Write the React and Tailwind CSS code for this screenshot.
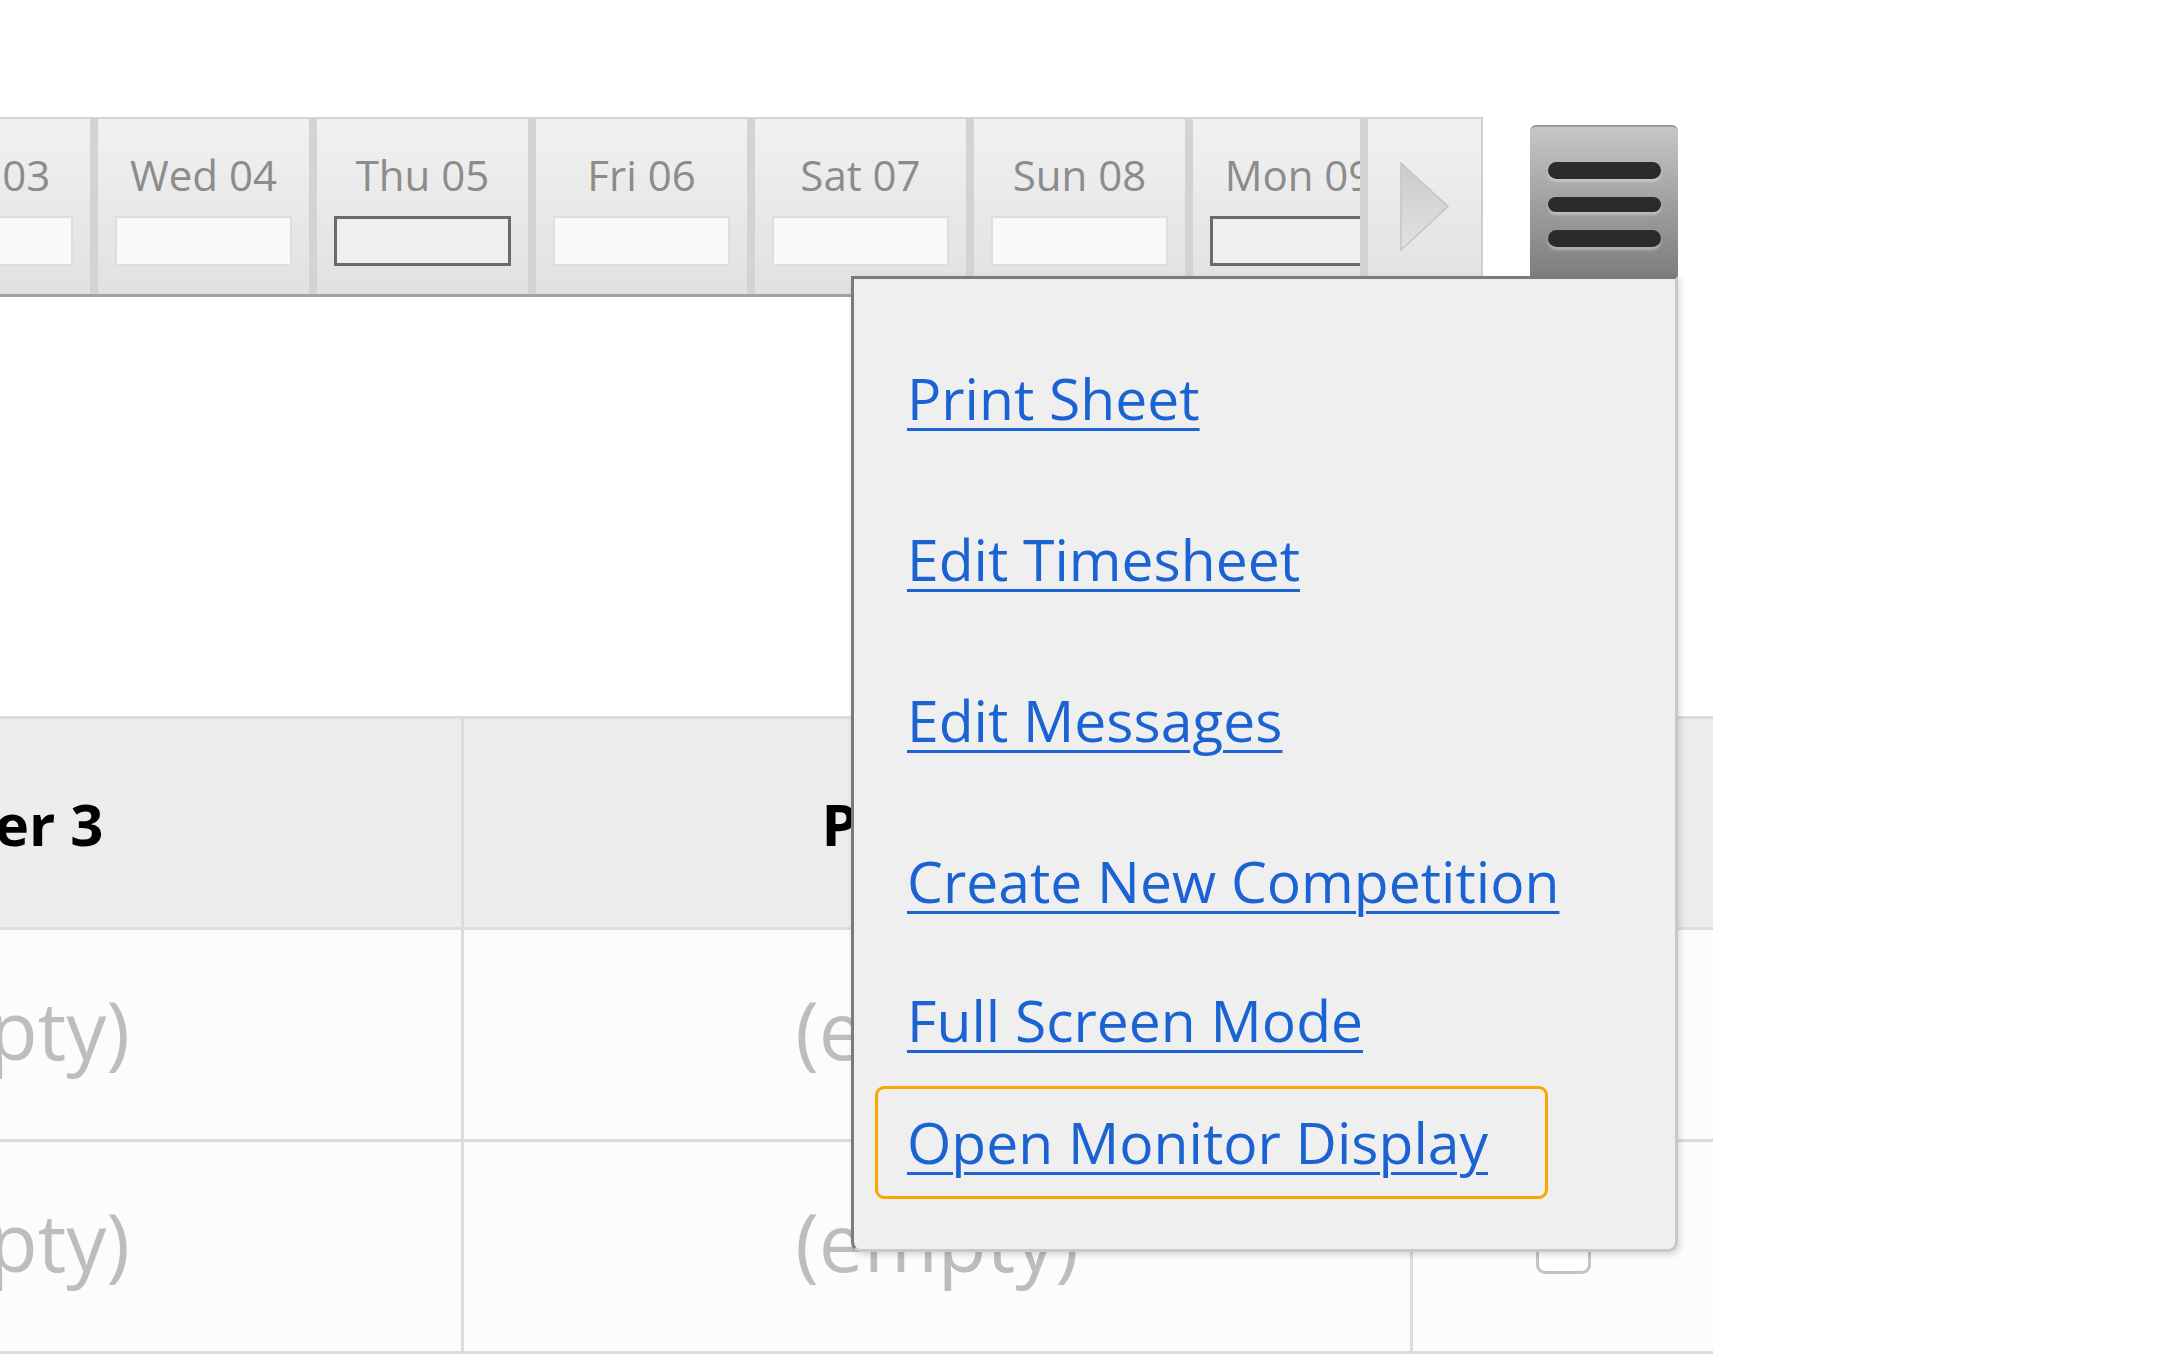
import React from "react";

const days = [
  { label: "Tue 03" },
  { label: "Wed 04" },
  { label: "Thu 05", active: true },
  { label: "Fri 06" },
  { label: "Sat 07" },
  { label: "Sun 08" },
  { label: "Mon 09", active: true },
];

const menuItems = [
  { label: "Print Sheet", h: "h-[161px]" },
  { label: "Edit Timesheet", h: "h-[161px]" },
  { label: "Edit Messages", h: "h-[161px]" },
  { label: "Create New Competition", h: "h-[161px]" },
  { label: "Full Screen Mode", h: "h-[116px]" },
];

function DayCell({ label, active }) {
  return (
    <div className="flex h-[175px] w-[211px] shrink-0 flex-col items-center bg-gradient-to-b from-[#f1f1f1] to-[#e1e1e1] pt-[32px]">
      <span className="text-[42px] leading-[48px] whitespace-nowrap text-[#8c8c8c]">{label}</span>
      {active ? (
        <div className="mt-[17px] h-[50px] w-[177px] border-[3px] border-[#6a6a6a] bg-[#efefef]" />
      ) : (
        <div className="mt-[17px] h-[50px] w-[177px] border-2 border-[#dedede] bg-[#f9f9f9]" />
      )}
    </div>
  );
}

function Arrow() {
  return (
    <svg width="50" height="89" viewBox="0 0 50 89">
      <defs>
        <linearGradient id="tri" x1="0" y1="0" x2="0" y2="1">
          <stop offset="0" stopColor="#cbcbcb" />
          <stop offset="1" stopColor="#e2e2e2" />
        </linearGradient>
      </defs>
      <path d="M1 1 L48 44.5 L1 88 Z" fill="url(#tri)" stroke="#c4c4c4" strokeWidth="1.5" />
    </svg>
  );
}

function Checkbox() {
  return <div className="h-[55px] w-[55px] rounded-[9px] border-[3px] border-[#c4c4c4] bg-white" />;
}

export default function App() {
  return (
    <div className="min-h-[1358px] w-full overflow-hidden bg-white font-['Open_Sans',sans-serif]">
      {/* date strip + menu button */}
      <div className="flex items-start pt-[117px]">
        <div className="flex border-t-2 border-r-2 border-b-[3px] border-t-[#d4d4d4] border-r-[#cfcfcf] border-b-[#a2a2a2] bg-[#d3d3d3]">
          <div className="w-[1360px] overflow-hidden">
            <div className="-ml-[121px] flex gap-[8px]">
              {days.map((d) => (
                <DayCell key={d.label} {...d} />
              ))}
            </div>
          </div>
          <div className="ml-[8px] flex h-[175px] w-[113px] items-center justify-center bg-gradient-to-b from-[#f1f1f1] to-[#e1e1e1]">
            <Arrow />
          </div>
        </div>

        <div className="relative ml-[47px] mt-[8px]">
          <button className="flex h-[155px] w-[148px] flex-col items-center rounded-t-[6px] border-t-2 border-[#9a9a9a] bg-gradient-to-b from-[#c6c6c6] to-[#7c7c7c] pt-[35px]">
            <span className="h-[17px] w-[113px] rounded-full bg-[#2b2b2b] shadow-[0_3px_3px_rgba(255,255,255,0.35)]" />
            <span className="mt-[18px] h-[15px] w-[113px] rounded-full bg-[#2b2b2b] shadow-[0_3px_3px_rgba(255,255,255,0.35)]" />
            <span className="mt-[18px] h-[17px] w-[113px] rounded-full bg-[#2b2b2b] shadow-[0_3px_3px_rgba(255,255,255,0.35)]" />
          </button>

          {/* dropdown */}
          <div className="absolute top-[151px] right-0 z-10 h-[976px] w-[827px] rounded-b-[10px] border-t-[3px] border-l-[3px] border-r-[3px] border-b-[3px] border-t-[#7a7a7a] border-l-[#7a7a7a] border-r-[#c8c8c8] border-b-[#c8c8c8] bg-[#efefef] pt-[39px] shadow-[2px_3px_6px_rgba(0,0,0,0.15)]">
            {menuItems.map((m) => (
              <div key={m.label} className={`flex items-center pl-[53px] ${m.h}`}>
                <a href="#" className="text-[57px] leading-none text-[#1b63d3] underline decoration-[3px] underline-offset-[8px]">
                  {m.label}
                </a>
              </div>
            ))}
            <div className="mt-[8px] ml-[21px] flex h-[113px] w-[673px] items-center rounded-[9px] border-[3px] border-[#ffa500] pl-[29px]">
              <a href="#" className="text-[57px] leading-none text-[#1b63d3] underline decoration-[3px] underline-offset-[8px]">
                Open Monitor Display
              </a>
            </div>
          </div>
        </div>
      </div>

      {/* table */}
      <div className="mt-[419px] w-[1713px] overflow-hidden">
        <div className="-ml-[485px] grid grid-cols-[949px_949px_300px] border-t-[3px] border-r-[3px] border-[#dcdcdc]">
          <div className="flex h-[211px] items-center justify-center border-r-[3px] border-b-[3px] border-[#dcdcdc] bg-[#ececec] text-[58px] font-bold text-black">
            Player 3
          </div>
          <div className="flex h-[211px] items-center justify-center border-r-[3px] border-b-[3px] border-[#dcdcdc] bg-[#ececec] text-[58px] font-bold text-black">
            Player 4
          </div>
          <div className="flex h-[211px] items-center justify-center border-b-[3px] border-[#dcdcdc] bg-[#ececec] text-[58px] font-bold text-black">
            Done
          </div>

          {[0, 1].map((r) => (
            <React.Fragment key={r}>
              <div className="flex h-[212px] items-center justify-center border-r-[3px] border-b-[3px] border-[#dcdcdc] bg-[#fcfcfc] pb-[12px] text-[80px] text-[#bdbdbd]">
                (empty)
              </div>
              <div className="flex h-[212px] items-center justify-center border-r-[3px] border-b-[3px] border-[#dcdcdc] bg-[#fcfcfc] pb-[12px] text-[80px] text-[#bdbdbd]">
                (empty)
              </div>
              <div className="flex h-[212px] items-center justify-center border-b-[3px] border-[#dcdcdc] bg-[#fcfcfc]">
                <Checkbox />
              </div>
            </React.Fragment>
          ))}
        </div>
      </div>
    </div>
  );
}
